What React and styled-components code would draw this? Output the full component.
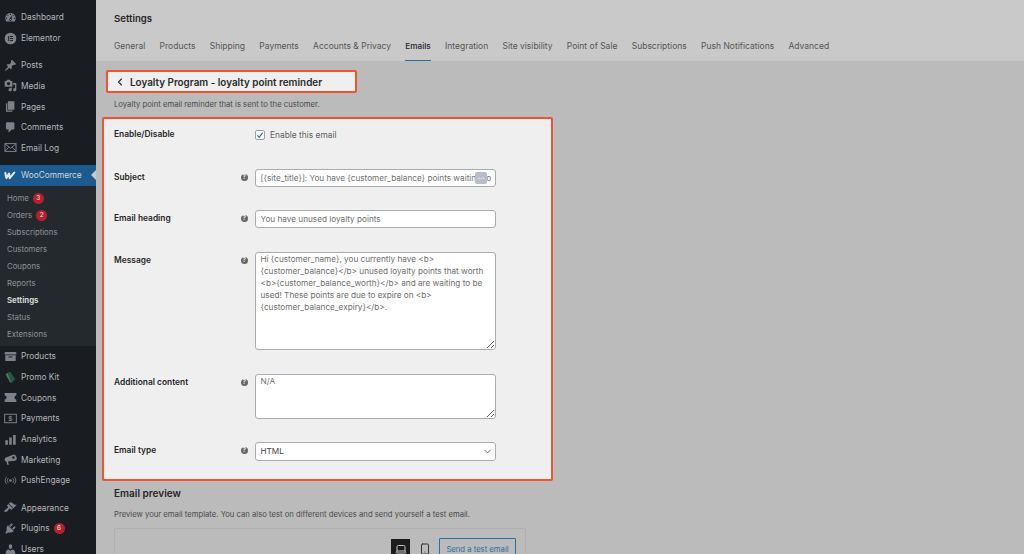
import React from "react";
import styled, { createGlobalStyle } from "styled-components";
import { ChevronLeft, ChevronDown, Laptop, Smartphone } from "lucide-react";

const Global = createGlobalStyle`
  html, body { margin: 0; padding: 0; height: 100%; overflow: hidden; background: #bbbbbb; }
  * { box-sizing: border-box; }
  body { font-family: Inter, "Liberation Sans", sans-serif; }
`;

const Page = styled.div`
  display: flex;
  width: 1024px;
  height: 554px;
  overflow: hidden;
  background: #bbbbbb;
`;

const Sidebar = styled.nav`
  flex: 0 0 96px;
  height: 554px;
  overflow: hidden;
  background: #191d21;
  padding-top: 7px;
  color: #b4b6b8;
  font-size: 8.3px;
`;

const Group = styled.div`
  margin-bottom: ${(p) => p.$gap ?? 6.5}px;
`;

const MenuRow = styled.div`
  position: relative;
  display: flex;
  align-items: center;
  height: 20.7px;
  padding-left: 4px;
  gap: 4px;
  white-space: nowrap;
  background: ${(p) => (p.$active ? "#1c5b90" : "transparent")};
  color: ${(p) => (p.$active ? "#d3d6d9" : "inherit")};

  ${(p) =>
    p.$active &&
    `&::after {
      content: "";
      position: absolute;
      right: 0;
      top: 5px;
      border: 5px solid transparent;
      border-left-width: 0;
      border-right-color: #c9c9c9;
    }`}
`;

const IconSlot = styled.span`
  display: flex;
  flex: 0 0 13px;
  width: 13px;
  height: 13px;
  color: #7f8285;

  svg { width: 13px; height: 13px; display: block; }
`;

const Submenu = styled.div`
  background: #24292d;
  padding: 4px 0 3.5px;
`;

const SubRow = styled.div`
  display: flex;
  align-items: center;
  gap: 4px;
  height: 17px;
  padding-left: 7px;
  font-size: 7.8px;
  white-space: nowrap;
  color: ${(p) => (p.$current ? "#d4d5d6" : "#909396")};
  font-weight: ${(p) => (p.$current ? 700 : 400)};
`;

const Badge = styled.span`
  display: inline-flex;
  align-items: center;
  justify-content: center;
  width: 11px;
  height: 11px;
  border-radius: 50%;
  background: #b3212c;
  color: #e6d5d6;
  font-size: 6.5px;
  font-weight: 500;
`;

const Main = styled.main`
  flex: 1;
  min-width: 0;
  display: flex;
  flex-direction: column;
`;

const Header = styled.header`
  flex: 0 0 60.5px;
  background: #c9c9c9;
  padding: 13px 18px 0;
`;

const Title = styled.h1`
  margin: 0;
  font-size: 9.6px;
  line-height: 11px;
  font-weight: 600;
  color: #262626;
`;

const Tabs = styled.div`
  display: flex;
  gap: 14.3px;
  margin-top: 12px;
`;

const Tab = styled.span`
  height: 24.5px;
  padding-top: 5px;
  font-size: ${(p) => (p.$active ? 8.2 : 8.5)}px;
  line-height: 11px;
  white-space: nowrap;
  color: ${(p) => (p.$active ? "#262626" : "#555555")};
  font-weight: ${(p) => (p.$active ? 500 : 400)};
  border-bottom: ${(p) => (p.$active ? "1.5px solid #2a6f9e" : "none")};
`;

const Body = styled.div`
  padding: 9.5px 0 0 6px;
`;

const BackBox = styled.div`
  display: flex;
  align-items: center;
  width: 251px;
  height: 23px;
  margin-left: 4px;
  border: 2px solid #f0532d;
  border-radius: 2px;
  background: #efefef;
  padding-left: 5.5px;
  gap: 4.5px;
  font-size: 9.9px;
  font-weight: 600;
  color: #2a2a2a;
  white-space: nowrap;
`;

const Lead = styled.p`
  margin: 6px 0 7px 12px;
  font-size: 7.7px;
  line-height: 11px;
  color: #4a4a4a;
  white-space: nowrap;
`;

const Panel = styled.section`
  width: 451px;
  height: 364px;
  border: 2px solid #f0532d;
  border-radius: 2px;
  background: #efefef;
  padding: 6.5px 0 0 10px;
`;

const FormRow = styled.div`
  display: grid;
  grid-template-columns: 126px 15px 241px;
  align-items: start;
  margin-bottom: ${(p) => p.$after}px;
`;

const FieldLabel = styled.label`
  padding-top: 3.5px;
  font-size: 8.4px;
  line-height: 11px;
  font-weight: 600;
  color: #262626;
  white-space: nowrap;
`;

const HelpCell = styled.span`
  padding-top: 5px;
  display: flex;
`;

const Help = styled.span`
  display: flex;
  align-items: center;
  justify-content: center;
  width: 7.5px;
  height: 7.5px;
  margin-left: .5px;
  border-radius: 50%;
  background: #666666;
  color: #efefef;
  font-size: 6px;
  font-weight: 700;
  line-height: 1;
`;

const CheckField = styled.div`
  display: flex;
  align-items: center;
  gap: 5px;
  height: 18px;
  font-size: 8.4px;
  color: #5f5f5f;
  white-space: nowrap;
`;

const CheckBox = styled.span`
  display: flex;
  align-items: center;
  justify-content: center;
  width: 10px;
  height: 10px;
  background: #fff;
  border: 1px solid #9d9fa3;
  border-radius: 2px;
  color: #2271b1;

  svg { width: 8px; height: 8px; display: block; }
`;

const controlBase = `
  display: block;
  width: 241px;
  margin: 0;
  background: #ffffff;
  border: 1px solid #a9adb2;
  border-radius: 3px;
  outline: none;
  font-family: Inter, "Liberation Sans", sans-serif;
  font-size: 8.2px;
  color: #6e6e6e;
`;

const TextInput = styled.input`
  ${controlBase}
  height: 18px;
  padding: 0 4.5px;
`;

const InputWrap = styled.div`
  position: relative;
  width: 241px;
`;

const Dots = styled.span`
  position: absolute;
  left: 220px;
  top: 3px;
  display: flex;
  align-items: center;
  justify-content: center;
  width: 12px;
  height: 12px;
  border-radius: 2px;
  background: #b7bec9;
  color: #f1f3f6;
  font-size: 8px;
  font-weight: 700;
  letter-spacing: -.3px;
  line-height: 1;
`;

const TextArea = styled.textarea`
  ${controlBase}
  height: ${(p) => p.$h}px;
  padding: 0 4.5px;
  line-height: 12px;
  resize: vertical;
`;

const StaticSelect = styled.select`
  ${controlBase}
  height: 19px;
  padding: 0 4.5px;
  appearance: none;
  color: #444444;
`;

const Chevron = styled.span`
  position: absolute;
  right: 3px;
  top: 4px;
  color: #444;
  display: flex;
`;

const PreviewTitle = styled.h2`
  margin: 6px 0 0 12px;
  font-size: 10px;
  line-height: 12px;
  font-weight: 600;
  color: #262626;
`;

const PreviewLead = styled.p`
  margin: 10px 0 0 12px;
  font-size: 7.7px;
  line-height: 11px;
  color: #4a4a4a;
  white-space: nowrap;
`;

const PreviewCard = styled.div`
  width: 412px;
  height: 60px;
  margin: 8px 0 0 12px;
  border: 1px solid #b0b0b0;
  border-radius: 2px;
  display: flex;
  justify-content: flex-end;
  align-items: flex-start;
  padding: 10px 9px 0 0;
`;

const DeviceButton = styled.span`
  display: flex;
  align-items: center;
  justify-content: center;
  width: 19px;
  height: 19px;
  background: ${(p) => (p.$active ? "#1c1c1c" : "transparent")};
  color: ${(p) => (p.$active ? "#c8c8c8" : "#333")};
  margin-right: ${(p) => p.$mr}px;
`;

const SendButton = styled.span`
  display: flex;
  align-items: center;
  justify-content: center;
  width: 77px;
  height: 22px;
  margin-top: -1px;
  border: 1px solid #2a6f9e;
  border-radius: 1px;
  color: #2a6f9e;
  font-size: 7.7px;
  white-space: nowrap;
`;

const P = ({ d }) => (
  <svg viewBox="0 0 20 20" fill="currentColor"><path d={d} /></svg>
);

const icons = {
  dashboard: <P d="M3.76 16h12.48c1.1-1.37 1.76-3.11 1.76-5 0-4.42-3.58-8-8-8s-8 3.58-8 8c0 1.89.66 3.63 1.76 5zM10 4c.55 0 1 .45 1 1s-.45 1-1 1-1-.45-1-1 .45-1 1-1zM6 6c.55 0 1 .45 1 1s-.45 1-1 1-1-.45-1-1 .45-1 1-1zm8 0c.55 0 1 .45 1 1s-.45 1-1 1-1-.45-1-1 .45-1 1-1zm-5.37 5.55L12 7v6c0 1.1-.9 2-2 2s-2-.9-2-2c0-.57.24-1.08.63-1.45zM4 10c.55 0 1 .45 1 1s-.45 1-1 1-1-.45-1-1 .45-1 1-1zm12 0c.55 0 1 .45 1 1s-.45 1-1 1-1-.45-1-1 .45-1 1-1zm-5 3c0-.55-.45-1-1-1s-1 .45-1 1 .45 1 1 1 1-.45 1-1z" />,
  elementor: (
    <svg viewBox="0 0 20 20" fill="currentColor">
      <path fillRule="evenodd" d="M10 1a9 9 0 1 0 0 18 9 9 0 0 0 0-18zM6.5 6H8v8H6.5zM9.5 6h4.2v1.6H9.5zM9.5 9.2h4.2v1.6H9.5zM9.5 12.4h4.2V14H9.5z" />
    </svg>
  ),
  post: <P d="M10.44 3.02l1.82-1.82 6.36 6.35-1.83 1.82c-1.05-.68-2.48-.57-3.41.36l-.75.75c-.92.93-1.04 2.35-.35 3.41l-1.83 1.82-2.41-2.41-2.8 2.79c-.42.42-3.38 2.71-3.8 2.29s1.86-3.39 2.28-3.81l2.79-2.79L4.1 9.36l1.83-1.82c1.05.69 2.48.57 3.4-.36l.75-.75c.93-.92 1.05-2.35.36-3.41z" />,
  media: <P d="M13 11V4c0-.55-.45-1-1-1h-1.67L9 1H5L3.67 3H2c-.55 0-1 .45-1 1v7c0 .55.45 1 1 1h10c.55 0 1-.45 1-1zM7 4.5c1.38 0 2.5 1.12 2.5 2.5S8.38 9.5 7 9.5 4.5 8.38 4.5 7 5.62 4.5 7 4.5zM14 6h5v10.5c0 1.38-1.12 2.5-2.5 2.5S14 17.88 14 16.5s1.12-2.5 2.5-2.5c.17 0 .34.02.5.05V9h-3V6zm-4 8.05V13h2v3.5c0 1.38-1.12 2.5-2.5 2.5S7 17.88 7 16.5 8.12 14 9.5 14c.17 0 .34.02.5.05z" />,
  pages: <P d="M6 15V2h10v13H6zm-1 1h8v2H3V5h2v11z" />,
  comments: <P d="M5 2h9c1.1 0 2 .9 2 2v7c0 1.1-.9 2-2 2h-2l-5 5v-5H5c-1.1 0-2-.9-2-2V4c0-1.1.9-2 2-2z" />,
  mail: (
    <svg viewBox="0 0 20 20" fill="none" stroke="currentColor" strokeWidth="1.5">
      <rect x="1.5" y="4" width="17" height="12" />
      <path d="M1.5 4.5L10 11l8.5-6.5M1.5 15.5l6-6M18.5 15.5l-6-6" />
    </svg>
  ),
  woo: (
    <svg viewBox="0 0 20 20" fill="none" stroke="#e3e6e9" strokeWidth="3.2" strokeLinejoin="round" strokeLinecap="round">
      <path d="M2 6l1.8 8 4-7 1 7 7-8.5" />
    </svg>
  ),
  products: <P d="M19 4v3H1V4c0-.55.45-1 1-1h16c.55 0 1 .45 1 1zM2 8h16v8c0 .55-.45 1-1 1H3c-.55 0-1-.45-1-1V8zm5 2v1.5h6V10H7z" />,
  promo: (
    <svg viewBox="0 0 20 20">
      <path fill="#24583d" d="M5.5 2.5l4-1.500 8 11.500-5.500 5.500z" />
      <path fill="#55705f" d="M2.5 5.500L5.500 2.500 12 18l-3-1z" />
    </svg>
  ),
  coupon: <P d="M1 3h18v4a3 3 0 0 0 0 6v4H1v-4a3 3 0 0 0 0-6z" />,
  payments: (
    <svg viewBox="0 0 20 20" fill="none" stroke="currentColor" strokeWidth="1.5">
      <rect x="1" y="3.5" width="18" height="13" />
      <text x="10" y="14" fontSize="10" fontWeight="700" fill="currentColor" stroke="none" textAnchor="middle" fontFamily="Inter, sans-serif">$</text>
    </svg>
  ),
  analytics: <P d="M2 11h4v7H2zM8 7h4v11H8zM14 3h4v15h-4z" />,
  marketing: (
    <svg viewBox="0 0 20 20" fill="currentColor">
      <path d="M14 2.500a3.500 5 -20 1 1 3 9.500L6 13l1.500 5H5l-1.500-5C2 13 1 11.500 1 10s1-2.500 2-3z" />
      <circle cx="14.500" cy="7" r="2" fill="#191d21" />
    </svg>
  ),
  push: (
    <svg viewBox="0 0 20 20" fill="none" stroke="currentColor" strokeWidth="1.3">
      <circle cx="10" cy="10" r="2" fill="currentColor" stroke="none" />
      <path d="M6.500 6.500a5 5 0 0 0 0 7M13.500 6.500a5 5 0 0 1 0 7M4 4.500a8 8 0 0 0 0 11M16 4.500a8 8 0 0 1 0 11" />
    </svg>
  ),
  appearance: <P d="M14.48 11.06L7.41 3.99l1.5-1.5c.5-.56 2.3-.47 3.51.32 1.21.8 1.43 1.28 2.91 2.1 1.18.64 2.45 1.26 4.45.85zm-.71.71L6.7 4.7 4.93 6.47c-.39.39-.39 1.02 0 1.41l1.06 1.06c.39.39.39 1.03 0 1.42-.6.6-1.43 1.11-2.21 1.69-.35.26-.7.53-1.01.84C1.43 13.23.4 14.84.4 15.79c0 .2.04.35.1.48.55 1.1 3.36.75 5.1-.98.31-.31.58-.66.84-1.01.58-.78 1.09-1.61 1.69-2.21.39-.39 1.03-.39 1.42 0l1.06 1.06c.39.39 1.02.39 1.41 0z" />,
  plugins: <P d="M13.11 4.36L9.87 7.6 8 5.73l3.24-3.24c.35-.34 1.05-.2 1.56.32.52.51.66 1.21.31 1.55zm-8 1.77l.91-1.12 9.01 9.01-1.19.84c-.71.71-2.63 1.16-3.82 1.16H6.14L4.9 17.26c-.59.59-1.54.59-2.12 0-.59-.58-.59-1.53 0-2.12l1.24-1.24v-3.88c0-1.13.4-3.19 1.09-3.89zm7.26 3.97l3.24-3.24c.34-.35 1.04-.21 1.55.31.52.51.66 1.21.31 1.55l-3.24 3.25z" />,
  users: <P d="M10 9.25c-2.27 0-2.73-3.44-2.73-3.44C7 4.02 7.82 2 9.97 2c2.16 0 2.98 2.02 2.71 3.81 0 0-.41 3.44-2.68 3.44zm0 2.57L12.72 10c2.39 0 4.52 2.33 4.52 4.53v2.49s-3.65 1.13-7.24 1.13c-3.65 0-7.24-1.13-7.24-1.13v-2.49c0-2.25 1.94-4.48 4.47-4.48z" />,
};

const Item = ({ icon, label, active, badge }) => (
  <MenuRow $active={active}>
    <IconSlot>{icons[icon]}</IconSlot>
    {label}
    {badge && <Badge>{badge}</Badge>}
  </MenuRow>
);

const subItems = [
  ["Home", "3"], ["Orders", "2"], ["Subscriptions"], ["Customers"], ["Coupons"],
  ["Reports"], ["Settings"], ["Status"], ["Extensions"],
];

const tabs = ["General", "Products", "Shipping", "Payments", "Accounts & Privacy", "Emails", "Integration", "Site visibility", "Point of Sale", "Subscriptions", "Push Notifications", "Advanced"];

const message = "Hi {customer_name}, you currently have <b>{customer_balance}</b> unused loyalty points that worth <b>{customer_balance_worth}</b> and are waiting to be used! These points are due to expire on <b>{customer_balance_expiry}</b>.";

export default function App() {
  return (
    <Page>
      <Global />
      <Sidebar>
        <Group>
          <Item icon="dashboard" label="Dashboard" />
          <Item icon="elementor" label="Elementor" />
        </Group>
        <Group>
          <Item icon="post" label="Posts" />
          <Item icon="media" label="Media" />
          <Item icon="pages" label="Pages" />
          <Item icon="comments" label="Comments" />
          <Item icon="mail" label="Email Log" />
        </Group>
        <Group $gap={0}>
          <Item icon="woo" label="WooCommerce" active />
          <Submenu>
            {subItems.map(([name, count]) => (
              <SubRow key={name} $current={name === "Settings"}>
                {name}
                {count && <Badge>{count}</Badge>}
              </SubRow>
            ))}
          </Submenu>
        </Group>
        <Group>
          <Item icon="products" label="Products" />
          <Item icon="promo" label="Promo Kit" />
          <Item icon="coupon" label="Coupons" />
          <Item icon="payments" label="Payments" />
          <Item icon="analytics" label="Analytics" />
          <Item icon="marketing" label="Marketing" />
          <Item icon="push" label="PushEngage" />
        </Group>
        <Group>
          <Item icon="appearance" label="Appearance" />
          <Item icon="plugins" label="Plugins" badge="6" />
          <Item icon="users" label="Users" />
        </Group>
      </Sidebar>
      <Main>
        <Header>
          <Title>Settings</Title>
          <Tabs>
            {tabs.map((t) => (
              <Tab key={t} $active={t === "Emails"}>{t}</Tab>
            ))}
          </Tabs>
        </Header>
        <Body>
          <BackBox>
            <ChevronLeft size={12} strokeWidth={2.2} />
            Loyalty Program - loyalty point reminder
          </BackBox>
          <Lead>Loyalty point email reminder that is sent to the customer.</Lead>
          <Panel>
            <FormRow $after={25}>
              <FieldLabel>Enable/Disable</FieldLabel>
              <span />
              <CheckField>
                <CheckBox>
                  <svg viewBox="0 0 12 12" fill="none" stroke="currentColor" strokeWidth="1.8"><path d="M2 6.5l2.8 3L10 2.5" /></svg>
                </CheckBox>
                Enable this email
              </CheckField>
            </FormRow>
            <FormRow $after={23}>
              <FieldLabel>Subject</FieldLabel>
              <HelpCell><Help>?</Help></HelpCell>
              <InputWrap>
                <TextInput readOnly value="[{site_title}]: You have {customer_balance} points waiting for you" />
                <Dots>···</Dots>
              </InputWrap>
            </FormRow>
            <FormRow $after={24}>
              <FieldLabel>Email heading</FieldLabel>
              <HelpCell><Help>?</Help></HelpCell>
              <TextInput readOnly value="You have unused loyalty points" />
            </FormRow>
            <FormRow $after={24}>
              <FieldLabel>Message</FieldLabel>
              <HelpCell><Help>?</Help></HelpCell>
              <TextArea $h={98} readOnly value={message} />
            </FormRow>
            <FormRow $after={23}>
              <FieldLabel>Additional content</FieldLabel>
              <HelpCell><Help>?</Help></HelpCell>
              <TextArea $h={45} readOnly value="N/A" />
            </FormRow>
            <FormRow $after={0}>
              <FieldLabel>Email type</FieldLabel>
              <HelpCell><Help>?</Help></HelpCell>
              <InputWrap>
                <StaticSelect defaultValue="HTML"><option>HTML</option></StaticSelect>
                <Chevron><ChevronDown size={11} strokeWidth={1.8} /></Chevron>
              </InputWrap>
            </FormRow>
          </Panel>
          <PreviewTitle>Email preview</PreviewTitle>
          <PreviewLead>Preview your email template. You can also test on different devices and send yourself a test email.</PreviewLead>
          <PreviewCard>
            <DeviceButton $active $mr={5.5}><Laptop size={12} /></DeviceButton>
            <DeviceButton $mr={4.5}><Smartphone size={12} /></DeviceButton>
            <SendButton>Send a test email</SendButton>
          </PreviewCard>
        </Body>
      </Main>
    </Page>
  );
}
